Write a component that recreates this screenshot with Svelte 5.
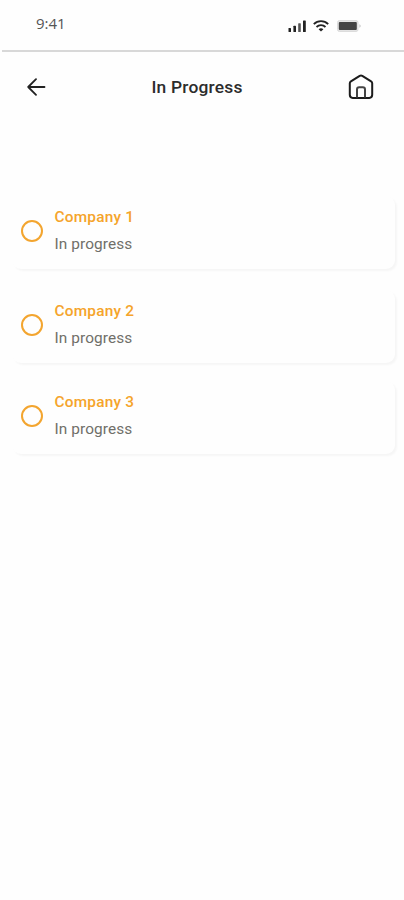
<script lang="ts">
	type Company = {
		name: string;
		status: string;
	};

	const companies: Company[] = [
		{ name: "Company 1", status: "In progress" },
		{ name: "Company 2", status: "In progress" },
		{ name: "Company 3", status: "In progress" },
	];
</script>

<div class="screen">
	<div class="status-bar">
		<span class="time">9:41</span>
		<div class="indicators">
			<svg class="signal" width="19" height="12" viewBox="0 0 19 12" fill="#222">
				<rect x="0.5" y="8" width="2.5" height="4" rx="0.6" />
				<rect x="5.4" y="5.7" width="2.6" height="6.3" rx="0.6" />
				<rect x="10.2" y="3.2" width="2.6" height="8.8" rx="0.6" fill="#555" />
				<rect x="15" y="0.5" width="2.8" height="11.5" rx="0.6" />
			</svg>
			<svg class="wifi" width="16" height="12" viewBox="0 0 16 12" fill="none" stroke="#222" stroke-width="1.8">
				<path d="M0.8 4.2C4.8 0.2 11.2 0.2 15.2 4.2" />
				<path d="M3.5 7C6 4.5 10 4.5 12.5 7" />
				<path d="M5.6 9.2C7 7.9 9 7.9 10.4 9.2L8 11.6Z" fill="#222" stroke="none" />
			</svg>
			<svg class="battery" width="25" height="12" viewBox="0 0 25 12">
				<rect x="0.5" y="0.5" width="20.5" height="11" rx="2" fill="#e4e4e4" stroke="#dcdcdc" />
				<rect x="1.8" y="2" width="18" height="8" rx="1" fill="#444" />
				<path d="M22.3 4.2C24.3 4.8 24.3 7.2 22.3 7.8Z" fill="#ccc" />
			</svg>
		</div>
	</div>

	<header class="header">
		<button class="icon-button" aria-label="Back">
			<svg width="19" height="18" viewBox="0 0 19 18" fill="none" stroke="#222" stroke-width="1.8" stroke-linecap="round" stroke-linejoin="round">
				<path d="M17.5 9H1.2M9 1.2L1.2 9L9 16.8" />
			</svg>
		</button>
		<h1>In Progress</h1>
		<button class="icon-button" aria-label="Home">
			<svg width="26" height="26" viewBox="0 0 26 26" fill="none" stroke="#1c1c1c" stroke-width="2" stroke-linejoin="round">
				<path d="M1.8 9.3Q1.8 8 2.9 7.3L11.7 1.8Q13 1 14.3 1.8L23.1 7.3Q24.2 8 24.2 9.3V20.8Q24.2 23.9 21.3 23.9H4.7Q1.8 23.9 1.8 20.8Z" />
				<path d="M9 23.5V15.5Q9 13.2 11.2 13.2H14.8Q17 13.2 17 15.5V23.5" stroke="#444" />
			</svg>
		</button>
	</header>

	<main class="list">
		{#each companies as company}
			<article class="card">
				<span class="radio"></span>
				<div class="details">
					<h2>{company.name}</h2>
					<p>{company.status}</p>
				</div>
			</article>
		{/each}
	</main>
</div>

<style>
	:global(body) {
		margin: 0;
		background: #fefefe;
	}

	.screen {
		width: 404px;
		height: 900px;
		overflow: hidden;
		background: #fefefe;
		font-family: Roboto, "Liberation Sans", sans-serif;
	}

	.status-bar {
		display: flex;
		justify-content: space-between;
		box-sizing: border-box;
		height: 52px;
		margin-left: 2px;
		padding: 13px 42px 0 34px;
		border-bottom: 2px solid #d8d8d8;
	}

	.time {
		font-family: "Open Sans", sans-serif;
		font-size: 15px;
		line-height: 20px;
		color: #555;
	}

	.indicators {
		display: flex;
		align-items: flex-start;
		padding-top: 7px;
	}

	.signal {
		margin-right: 6px;
	}

	.wifi {
		margin-right: 8px;
	}

	.header {
		display: flex;
		align-items: center;
		justify-content: space-between;
		height: 70px;
		padding: 0 30px 0 27px;
	}

	.icon-button {
		display: flex;
		padding: 0;
		border: 0;
		background: none;
	}

	h1 {
		margin: 0;
		font-size: 17.4px;
		font-weight: 500;
		line-height: 22px;
		letter-spacing: 0.2px;
		color: #2c2c2c;
	}

	.list {
		display: flex;
		flex-direction: column;
		gap: 19px;
		padding: 74px 9px 0 12px;
	}

	.card {
		display: flex;
		align-items: center;
		box-sizing: border-box;
		height: 73px;
		padding: 0 0 4px 9px;
		border-radius: 9px;
		background: #fefefe;
		box-shadow: 2px 2px 2px #f6f6f6;
	}

	.card:nth-child(2) {
		margin-top: 2px;
	}

	.card:nth-child(3) {
		margin-top: -1px;
	}

	.radio {
		box-sizing: border-box;
		width: 22px;
		height: 22px;
		margin-right: 11.5px;
		border: 2px solid #f3a52f;
		border-radius: 50%;
	}

	h2 {
		margin: 0;
		font-size: 15.4px;
		font-weight: 500;
		line-height: 27px;
		letter-spacing: 0.2px;
		color: #f5a42b;
	}

	p {
		margin: 0;
		font-size: 15.4px;
		line-height: 27px;
		letter-spacing: 0.1px;
		color: #706f69;
	}
</style>
